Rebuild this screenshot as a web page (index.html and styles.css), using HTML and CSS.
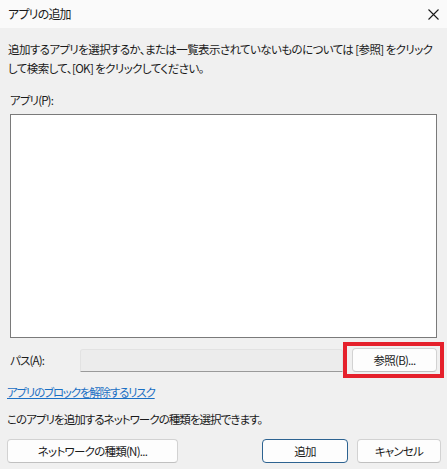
FILE: index.html
```html
<!DOCTYPE html>
<html lang="ja">
<head>
<meta charset="utf-8">
<title>アプリの追加</title>
<link rel="stylesheet" href="styles.css">
</head>
<body>
<div class="dialog">
  <div class="titlebar">
    <span class="title">アプリの追加</span>
    <svg class="close" width="11" height="11" viewBox="0 0 11 11"><path d="M0.5 0.5 L10.5 10.5 M10.5 0.5 L0.5 10.5" stroke="#1a1a1a" stroke-width="1.1" fill="none"/></svg>
  </div>
  <div class="main">
    <p class="desc">追加するアプリを選択するか、または一覧表示されていないものについては [参照] をクリックして検索して、[OK] をクリックしてください。</p>
    <div class="label">アプリ(P):</div>
    <div class="listbox"></div>
    <div class="path-row">
      <span class="path-label">パス(A):</span>
      <div class="path-input"></div>
      <div class="browse-wrap">
        <button class="btn browse">参照(B)...</button>
        <span class="highlight"></span>
      </div>
    </div>
    <a class="link" href="#">アプリのブロックを解除するリスク</a>
    <p class="info">このアプリを追加するネットワークの種類を選択できます。</p>
    <div class="footer">
      <button class="btn network">ネットワークの種類(N)...</button>
      <div class="actions">
        <button class="btn primary add">追加</button>
        <button class="btn cancel">キャンセル</button>
      </div>
    </div>
  </div>
</div>
</body>
</html>
```
FILE: styles.css
```css
* { box-sizing: border-box; }
html, body {
  margin: 0;
  padding: 0;
  width: 447px;
  height: 469px;
  overflow: hidden;
  background: #f0f0f0;
}
body {
  font-family: "Noto Sans CJK JP", "Noto Sans", sans-serif;
  font-size: 11.5px;
  color: #1a1a1a;
  font-feature-settings: "palt";
  letter-spacing: -0.85px;
}
.titlebar {
  height: 28px;
  background: #fafafa;
  display: flex;
  align-items: center;
  justify-content: space-between;
  padding: 0 7px 0 8px;
}
.title { font-size: 12px; line-height: 28px; letter-spacing: -0.8px; }
.close { margin-right: 1px; }
.main {
  padding: 0 10px;
}
.desc {
  margin: 12px -3px 0 -2px;
  line-height: 19px;
  letter-spacing: -0.6px;
}
.label {
  margin-top: 13px;
  line-height: 19px;
}
.listbox {
  margin-top: 4px;
  height: 224px;
  background: #ffffff;
  border: 1px solid #7a7a7a;
}
.path-row {
  margin-top: 10px;
  display: flex;
  align-items: center;
  height: 24px;
}
.path-label {
  width: 70px;
  line-height: 19px;
}
.path-input {
  width: 263px;
  height: 23px;
  background: #ececec;
  border: 1px solid #e2e2e2;
  border-bottom-color: #9a9a9a;
  border-radius: 3px 3px 0 0;
}
.browse-wrap {
  position: relative;
  margin-left: 9px;
}
.btn {
  font-family: inherit;
  font-size: 11.5px;
  font-feature-settings: "palt";
  letter-spacing: -0.75px;
  color: #1a1a1a;
  background: #fdfdfd;
  border: 1px solid #d2d2d2;
  border-bottom-color: #c0c0c0;
  border-radius: 4px;
  height: 24px;
  padding: 0;
  line-height: 22px;
}
.browse { width: 85px; display: block; }
.highlight {
  position: absolute;
  left: -9px;
  top: -6px;
  right: -7px;
  bottom: -6px;
  border: 4px solid #e5202b;
}
.link {
  display: block;
  margin: 11px 0 0 -3px;
  line-height: 19px;
  color: #1a6fc4;
  text-decoration: underline;
  width: max-content;
  letter-spacing: -1.2px;
}
.info {
  margin: 8px 0 0 -3px;
  line-height: 19px;
  letter-spacing: -0.95px;
}
.footer {
  margin: 10px -4px 0 -3px;
  display: flex;
  justify-content: space-between;
}
.network { width: 171px; }
.actions { display: flex; gap: 9px; }
.add { width: 86px; }
.primary { border-color: #2d6391; }
.cancel { width: 84px; }
```
